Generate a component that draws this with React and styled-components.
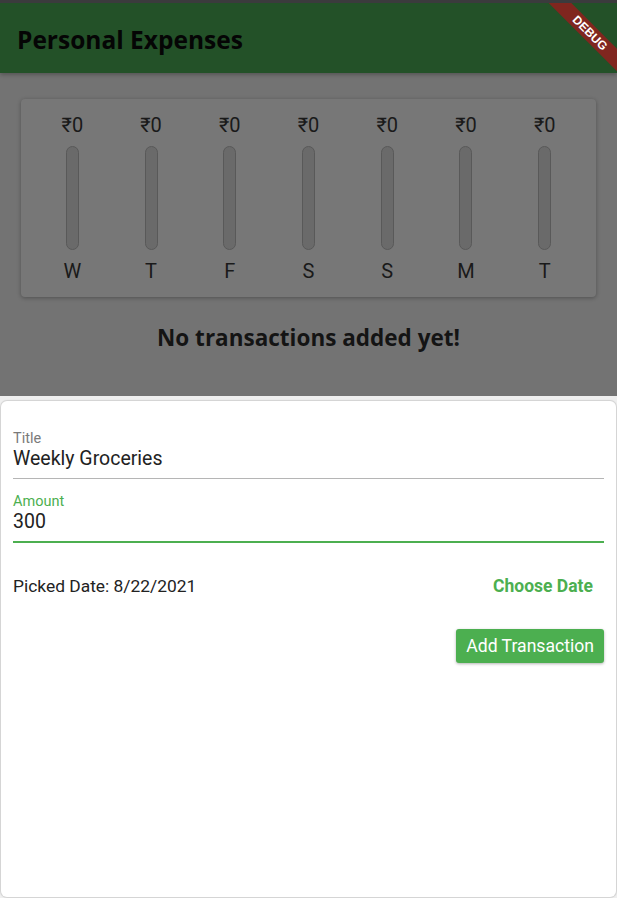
import React from "react";
import styled, { createGlobalStyle } from "styled-components";

const GlobalStyle = createGlobalStyle`
  html, body {
    margin: 0;
    padding: 0;
    background: #3a3a3a;
  }
  body {
    width: 617px;
    height: 898px;
    overflow: hidden;
    font-family: Roboto, "Noto Sans", sans-serif;
  }
`;

const days = ["W", "T", "F", "S", "S", "M", "T"];

const App = () => {
  return (
    <>
      <GlobalStyle />
      <Screen>
        <StatusBar />
        <AppShell>
          <AppBar>
            <AppTitle>Personal Expenses</AppTitle>
          </AppBar>
          <Body>
            <ChartCard>
              {days.map((d, i) => (
                <ChartColumn key={i}>
                  <Amount>₹0</Amount>
                  <Bar />
                  <Day>{d}</Day>
                </ChartColumn>
              ))}
            </ChartCard>
            <EmptyText>No transactions added yet!</EmptyText>
          </Body>
          <Sheet>
            <FormCard>
              <Field>
                <Label>Title</Label>
                <Value>Weekly Groceries</Value>
              </Field>
              <Field focused>
                <Label focused>Amount</Label>
                <Value>300</Value>
              </Field>
              <DateRow>
                <DateText>Picked Date: 8/22/2021</DateText>
                <TextButton>Choose Date</TextButton>
              </DateRow>
              <SubmitRow>
                <SubmitButton>Add Transaction</SubmitButton>
              </SubmitRow>
            </FormCard>
          </Sheet>
          <Ribbon>DEBUG</Ribbon>
        </AppShell>
      </Screen>
    </>
  );
};

const Screen = styled.div`
  display: flex;
  flex-direction: column;
  width: 617px;
  height: 898px;
`;

const StatusBar = styled.div`
  height: 3px;
  background: #3b3b3d;
`;

const AppShell = styled.div`
  position: relative;
  flex: 1;
  display: flex;
  flex-direction: column;
  overflow: hidden;
  background: #737373;
`;

const AppBar = styled.div`
  height: 70px;
  display: flex;
  align-items: center;
  padding-left: 17px;
  background: #235128;
  box-shadow: 0 2px 4px rgba(0, 0, 0, 0.25);
  position: relative;
  z-index: 1;
`;

const AppTitle = styled.h1`
  margin: 0;
  padding-top: 3px;
  font-family: "Open Sans", "Noto Sans", sans-serif;
  font-weight: 700;
  font-size: 24.5px;
  line-height: 30px;
  color: #050505;
`;

const Body = styled.div`
  height: 323px;
  display: flex;
  flex-direction: column;
`;

const ChartCard = styled.div`
  margin: 26px 21px 0;
  padding: 14px 12px;
  display: flex;
  background: #777777;
  border-radius: 4px;
  box-shadow: 0 1px 4px rgba(0, 0, 0, 0.3);
`;

const ChartColumn = styled.div`
  flex: 1;
  display: flex;
  flex-direction: column;
  align-items: center;
`;

const Amount = styled.div`
  height: 24px;
  line-height: 24px;
  font-size: 20px;
  color: #1a1a1a;
`;

const Bar = styled.div`
  width: 11px;
  height: 102px;
  margin: 9px 0;
  border: 1px solid #595959;
  border-radius: 10px;
  background: #6a6a6a;
`;

const Day = styled.div`
  height: 24px;
  line-height: 24px;
  font-size: 20px;
  color: #1a1a1a;
`;

const EmptyText = styled.div`
  margin-top: 27px;
  text-align: center;
  line-height: 28px;
  font-family: "Open Sans", "Noto Sans", sans-serif;
  font-weight: 700;
  font-size: 22.5px;
  color: #141414;
`;

const Sheet = styled.div`
  flex: 1;
  display: flex;
  flex-direction: column;
  background: #efefef;
  padding: 5px 1px 1px;
`;

const FormCard = styled.div`
  flex: 1;
  display: flex;
  flex-direction: column;
  background: #ffffff;
  border-radius: 6px;
  box-shadow: 0 0 1px 1px rgba(0, 0, 0, 0.12);
  padding: 29px 12px 12px;
`;

const Field = styled.div`
  display: flex;
  flex-direction: column;
  padding-bottom: 8px;
  border-bottom: ${(p) => (p.focused ? "2px solid #4caf50" : "1.5px solid #b5b5b5")};
  & + & {
    margin-top: 14px;
  }
`;

const Label = styled.div`
  font-size: 14.5px;
  line-height: 17px;
  color: ${(p) => (p.focused ? "#4caf50" : "#7a7a7a")};
`;

const Value = styled.div`
  font-size: 19.5px;
  line-height: 23px;
  color: #222222;
`;

const DateRow = styled.div`
  height: 48px;
  margin-top: 19px;
  display: flex;
  align-items: center;
  justify-content: space-between;
`;

const DateText = styled.div`
  font-size: 17.4px;
  color: #222222;
`;

const TextButton = styled.div`
  padding: 0 11px;
  font-size: 17.5px;
  font-weight: 700;
  color: #4caf50;
`;

const SubmitRow = styled.div`
  margin-top: 19px;
  display: flex;
  justify-content: flex-end;
`;

const SubmitButton = styled.div`
  height: 34px;
  padding: 0 10px;
  display: flex;
  align-items: center;
  background: #4caf50;
  border-radius: 3px;
  color: #ffffff;
  font-size: 17.6px;
  font-weight: 400;
  box-shadow: 0 1px 3px rgba(0, 0, 0, 0.3);
`;

const Ribbon = styled.div`
  position: absolute;
  top: 22px;
  left: 530px;
  width: 120px;
  height: 16px;
  line-height: 16px;
  transform: rotate(45deg);
  background: #80261f;
  color: #ffffff;
  text-align: center;
  font-family: "Liberation Sans", Roboto, sans-serif;
  font-weight: 700;
  font-size: 12px;
  z-index: 2;
`;

export default App;
